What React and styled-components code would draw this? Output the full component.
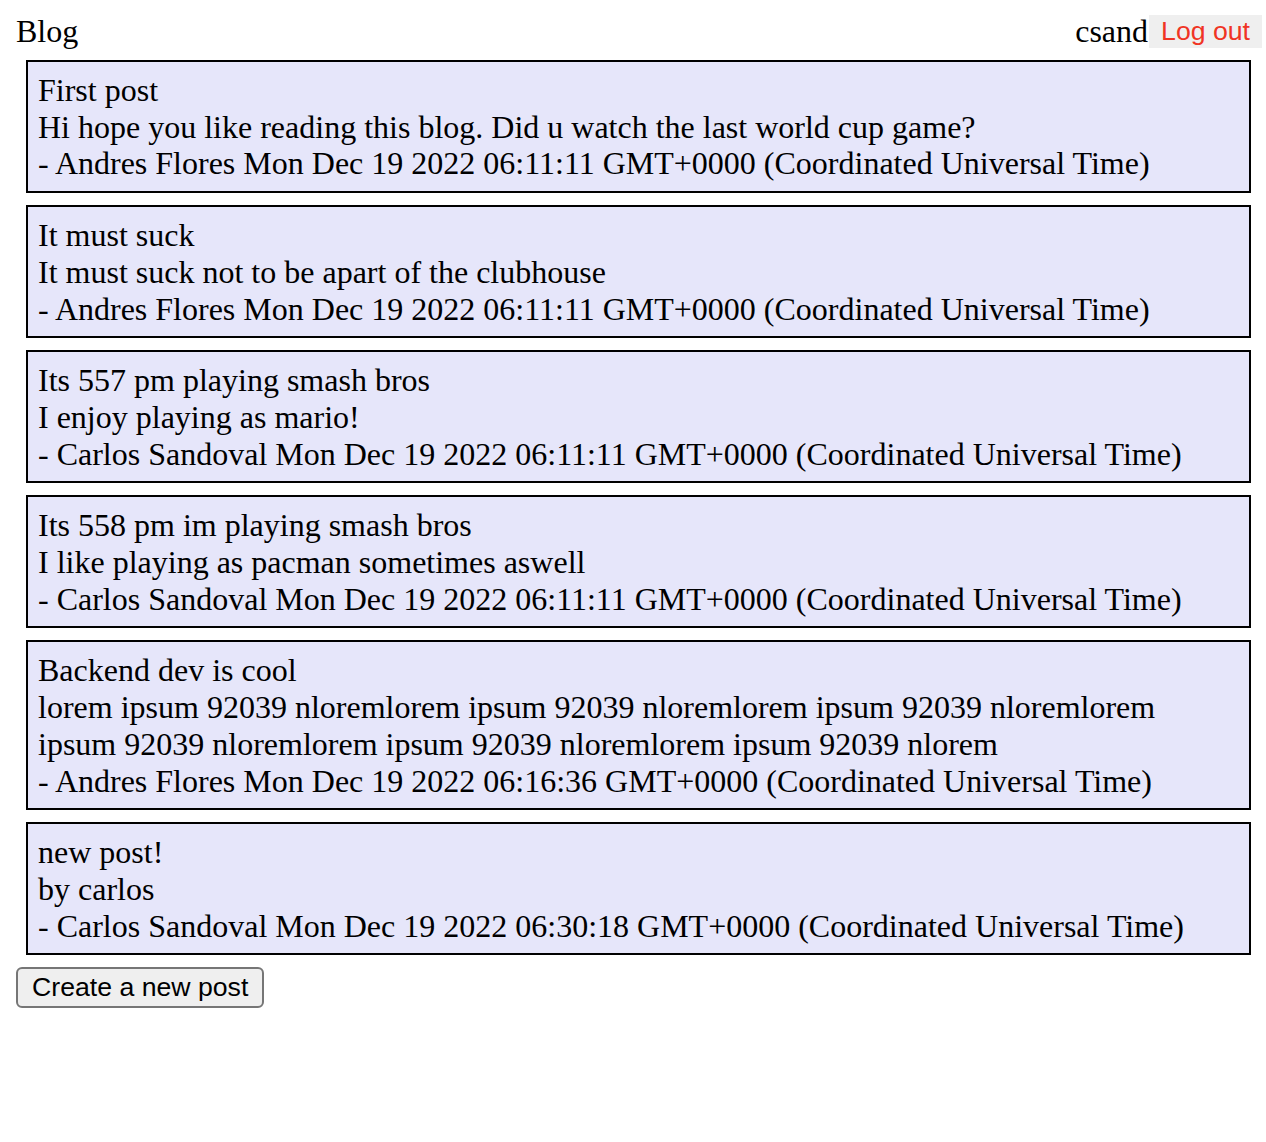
import React from 'react';
import styled, { createGlobalStyle } from 'styled-components';

const posts = [
  {
    id: 1,
    title: 'First post',
    body: 'Hi hope you like reading this blog. Did u watch the last world cup game?',
    author: 'Andres Flores',
    date: 'Mon Dec 19 2022 06:11:11 GMT+0000 (Coordinated Universal Time)',
  },
  {
    id: 2,
    title: 'It must suck',
    body: 'It must suck not to be apart of the clubhouse',
    author: 'Andres Flores',
    date: 'Mon Dec 19 2022 06:11:11 GMT+0000 (Coordinated Universal Time)',
  },
  {
    id: 3,
    title: 'Its 557 pm playing smash bros',
    body: 'I enjoy playing as mario!',
    author: 'Carlos Sandoval',
    date: 'Mon Dec 19 2022 06:11:11 GMT+0000 (Coordinated Universal Time)',
  },
  {
    id: 4,
    title: 'Its 558 pm im playing smash bros',
    body: 'I like playing as pacman sometimes aswell',
    author: 'Carlos Sandoval',
    date: 'Mon Dec 19 2022 06:11:11 GMT+0000 (Coordinated Universal Time)',
  },
  {
    id: 5,
    title: 'Backend dev is cool',
    body: 'lorem ipsum 92039 nloremlorem ipsum 92039 nloremlorem ipsum 92039 nloremlorem ipsum 92039 nloremlorem ipsum 92039 nloremlorem ipsum 92039 nlorem',
    author: 'Andres Flores',
    date: 'Mon Dec 19 2022 06:16:36 GMT+0000 (Coordinated Universal Time)',
  },
  {
    id: 6,
    title: 'new post!',
    body: 'by carlos',
    author: 'Carlos Sandoval',
    date: 'Mon Dec 19 2022 06:30:18 GMT+0000 (Coordinated Universal Time)',
  },
];

function App() {
  return (
    <StyledPage>
      <GlobalStyle />
      <StyledHeader>
        <span>Blog</span>
        <StyledUser>
          csand
          <StyledLogout>Log out</StyledLogout>
        </StyledUser>
      </StyledHeader>
      <StyledList>
        {
          posts.map(post => (
            <StyledPost key={post.id}>
              <div>{post.title}</div>
              <div>{post.body}</div>
              <div>- {post.author} {post.date}</div>
            </StyledPost>
          ))
        }
      </StyledList>
      <StyledCreate>Create a new post</StyledCreate>
    </StyledPage>
  );
}

const GlobalStyle = createGlobalStyle`
  body {
    margin: 0;
    background: #fff;
    color: #000;
    font-family: "Liberation Serif", "Times New Roman", serif;
    font-size: 32px;
  }
`;

const StyledPage = styled.div`
  padding: 13px 4px 16px 16px;
`;

const StyledHeader = styled.div`
  display: flex;
  justify-content: space-between;
  align-items: center;
  height: 37px;
  margin-bottom: 10px;
`;

const StyledUser = styled.div`
  display: flex;
  align-items: center;
`;

const StyledLogout = styled.button`
  height: 33px;
  margin-left: 1px;
  padding: 0 12px;
  border: none;
  background: #efefef;
  color: #f03424;
  font-family: "Liberation Sans", Arial, sans-serif;
  font-size: 26.67px;
`;

const StyledList = styled.div`
  display: flex;
  flex-direction: column;
  gap: 12px;
  margin: 0 11px 12px 10px;
`;

const StyledPost = styled.div`
  padding: 10px 10px 9px;
  border: 2px solid #000;
  background: #e6e6fa;
  line-height: 36.7px;
`;

const StyledCreate = styled.button`
  height: 41px;
  padding: 0 14px;
  border: 2px solid #767676;
  border-radius: 6px;
  background: #efefef;
  color: #000;
  font-family: "Liberation Sans", Arial, sans-serif;
  font-size: 26.67px;
`;

export default App;
